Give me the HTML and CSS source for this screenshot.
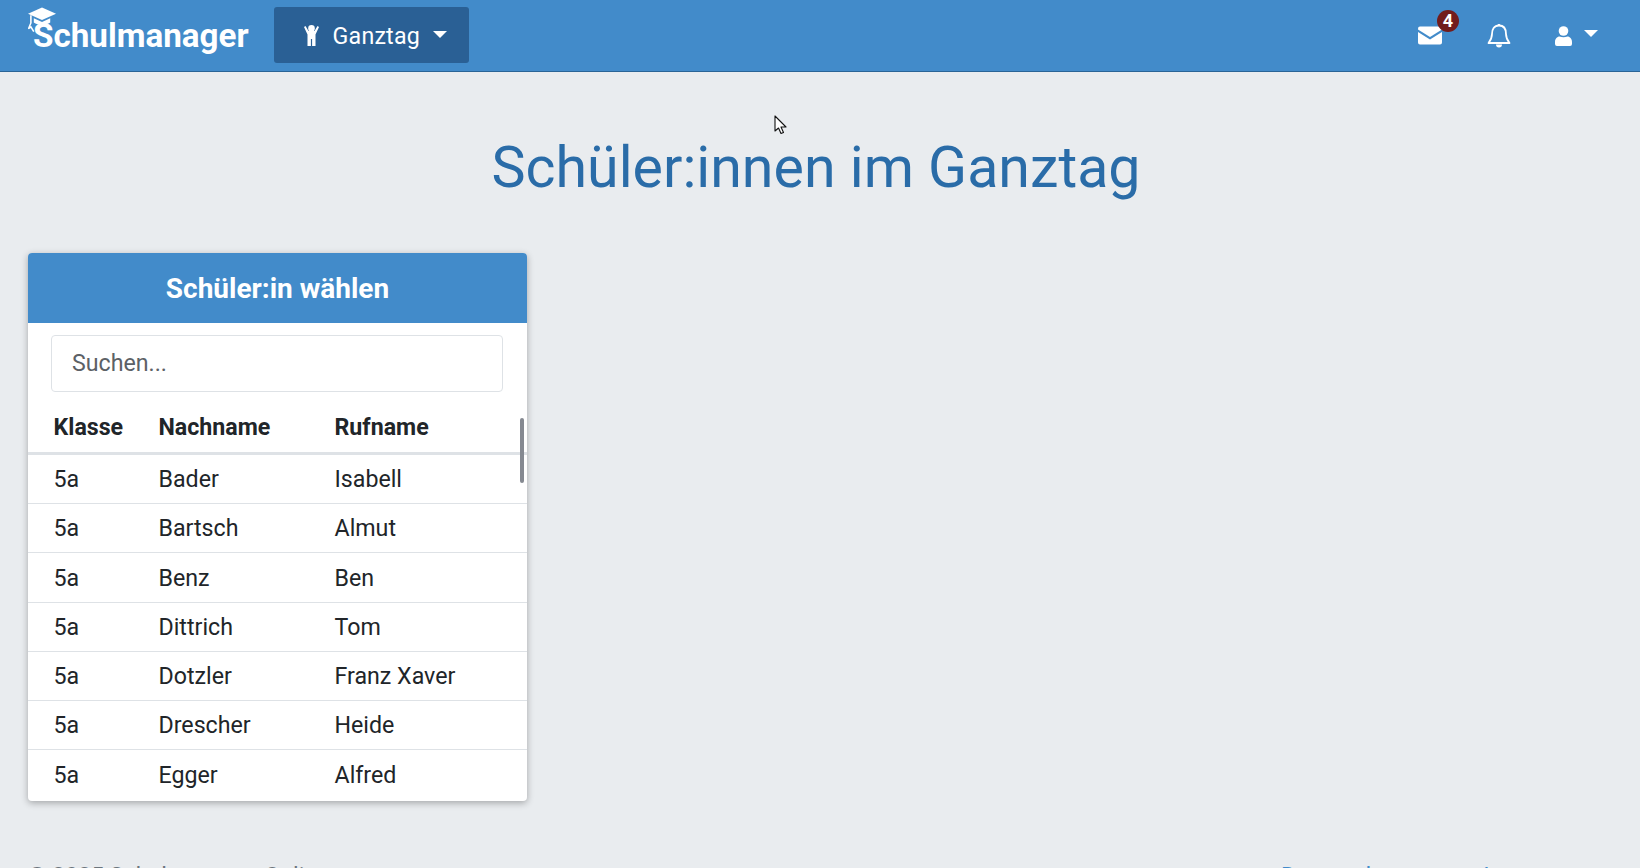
FILE: index.html
```html
<!DOCTYPE html>
<html lang="de">
<head>
<meta charset="utf-8">
<title>Schulmanager</title>
<link rel="stylesheet" href="styles.css">
</head>
<body>
<header class="navbar">
  <a class="brand">
    <svg class="brand-cap" viewBox="0 0 30 30"><path d="M14.500 0 L29 6.500 L14.500 13 L0 6.500 Z" fill="#fff"/><path d="M6 11 L14.500 15 L23 11 L23 15.500 C19 18.500 10 18.500 6 15.500 Z" fill="#fff"/><path d="M3 8 L3 16 L0.500 22 L3 20 L6 25" fill="none" stroke="#fff" stroke-width="1.600"/></svg>
    <span>Schulmanager</span>
  </a>
  <button class="module-btn">
    <svg class="child-icon" viewBox="0 0 15 21"><circle cx="7.500" cy="3.400" r="3.300" fill="#fff"/><path d="M1.500 1 L4.500 6 L10.500 6 L13.500 1 L15 2 L11.500 9.500 L11.500 21 L8.100 21 L8.100 14 L6.900 14 L6.900 21 L3.500 21 L3.500 9.500 L0 2 Z" fill="#fff"/></svg>
    <span>Ganztag</span>
    <i class="caret caret-lg"></i>
  </button>
  <nav class="nav-icons">
    <a class="icon-link mail">
      <svg class="mail-icon" viewBox="0 0 24 18"><path d="M2 0 H22 A2 2 0 0 1 24 2 V3 L12 10.500 L0 3 V2 A2 2 0 0 1 2 0 Z" fill="#fff"/><path d="M0 5.500 L12 13 L24 5.500 V16 A2 2 0 0 1 22 18 H2 A2 2 0 0 1 0 16 Z" fill="#fff"/></svg>
      <span class="badge">4</span>
    </a>
    <a class="icon-link bell">
      <svg class="bell-icon" viewBox="0 0 24 26"><path d="M12 2.500 C7 2.500 5 6.500 5 11 C5 15.500 3.500 17.500 1.500 20 H22.500 C20.500 17.500 19 15.500 19 11 C19 6.500 17 2.500 12 2.500 Z" fill="none" stroke="#fff" stroke-width="1.800" stroke-linejoin="round"/><path d="M10.800 1 H13.200 V3 H10.800 Z M9 21.500 H15 A3 3 0 0 1 9 21.500 Z" fill="#fff"/></svg>
    </a>
    <a class="icon-link user">
      <svg class="user-icon" viewBox="0 0 17 20"><circle cx="8.500" cy="5" r="4.800" fill="#fff"/><path d="M0 16 C0 12 3 10.500 4.500 10.500 C7 11.500 10 11.500 12.500 10.500 C14 10.500 17 12 17 16 V18 A2 2 0 0 1 15 20 H2 A2 2 0 0 1 0 18 Z" fill="#fff"/></svg>
      <i class="caret"></i>
    </a>
  </nav>
</header>

<main class="content">
  <h1 class="page-title">Schüler:innen im Ganztag</h1>
  <section class="card">
    <h2 class="card-head">Schüler:in wählen</h2>
    <div class="search-wrap"><input class="search" type="text" placeholder="Suchen..."></div>
    <div class="table-wrap">
      <table class="students">
        <thead><tr><th>Klasse</th><th>Nachname</th><th>Rufname</th></tr></thead>
        <tbody>
          <tr><td>5a</td><td>Bader</td><td>Isabell</td></tr>
          <tr><td>5a</td><td>Bartsch</td><td>Almut</td></tr>
          <tr><td>5a</td><td>Benz</td><td>Ben</td></tr>
          <tr><td>5a</td><td>Dittrich</td><td>Tom</td></tr>
          <tr><td>5a</td><td>Dotzler</td><td>Franz Xaver</td></tr>
          <tr><td>5a</td><td>Drescher</td><td>Heide</td></tr>
          <tr><td>5a</td><td>Egger</td><td>Alfred</td></tr>
        </tbody>
      </table>
      <div class="scroll-thumb"></div>
    </div>
  </section>
  <footer class="footer">
    <span>© 2025 Schulmanager Online</span>
    <span class="footer-links"><a>Datenschutz</a><a>Impressum</a></span>
  </footer>
</main>

<svg class="cursor" viewBox="0 0 14 20"><path d="M1 1 V16 L4.500 13 L7 18.500 L9.500 17.500 L7 12 L12 12 Z" fill="#fff" stroke="#111" stroke-width="1.100" stroke-linejoin="round"/></svg>
</body>
</html>
```
FILE: styles.css
```css
* { box-sizing: border-box; }
html, body { height: 868px; overflow: hidden; }
body {
  margin: 0;
  background: #e9ecef;
  color: #212529;
  font-family: Roboto, "Liberation Sans", sans-serif;
  font-size: 23.2px;
}
.navbar {
  height: 72px;
  background: #428bca;
  border-bottom: 1px solid #2a6496;
  display: flex;
  align-items: center;
  padding: 0 28px;
}
.brand {
  position: relative;
  color: #fff;
  font-size: 33.2px;
  font-weight: 700;
  margin: 0 25px 0 5px;
  line-height: 74px;
}
.brand-cap {
  position: absolute;
  left: -5px;
  top: 8px;
  width: 29px;
  height: 30px;
}
.module-btn {
  width: 195px;
  height: 56px;
  margin-top: -1px;
  background: #2a6095;
  border: 0;
  border-radius: 3px;
  color: #fff;
  font: 400 23.2px Roboto, sans-serif;
  display: flex;
  align-items: center;
  padding: 1px 0 0 30px;
  letter-spacing: 0.2px;
}
.child-icon { width: 15px; height: 21px; margin-right: 14px; }
.caret {
  display: inline-block;
  border-top: 7px solid #fff;
  border-left: 7px solid transparent;
  border-right: 7px solid transparent;
}
.caret-lg { margin-left: 13px; margin-bottom: 2px; }
.nav-icons {
  margin-left: auto;
  display: flex;
  align-items: center;
  padding-right: 14px;
}
.icon-link { position: relative; display: flex; align-items: center; }
.mail-icon { width: 24px; height: 19px; display: block; }
.badge {
  position: absolute;
  left: 19px;
  top: -16px;
  width: 22px;
  height: 22px;
  border-radius: 50%;
  background: #721c1c;
  color: #fff;
  font-size: 18px;
  font-weight: 700;
  line-height: 22px;
  text-align: center;
}
.mail { margin-right: 1px; }
.bell { margin-left: 44px; }
.bell-icon { width: 24px; height: 26px; display: block; }
.user { margin-left: 44px; }
.user-icon { width: 17px; height: 20px; margin-right: 12px; }
.user .caret { margin-bottom: 5px; }
.content { padding: 0 28px; }
.page-title {
  margin: 61px 0 50px;
  padding-right: 8px;
  color: #2a6ca8;
  font-size: 57.3px;
  font-weight: 400;
  line-height: 70px;
  text-align: center;
}
.card {
  width: 499px;
  height: 548px;
  background: #fff;
  border-radius: 4px;
  overflow: hidden;
  box-shadow: 0 2px 7px rgba(0,0,0,.3);
}
.card-head {
  margin: 0;
  height: 70px;
  background: #428bca;
  color: #fff;
  font-size: 28px;
  font-weight: 700;
  line-height: 72px;
  text-align: center;
}
.search-wrap { padding: 12px 24px 0 23px; }
.search {
  display: block;
  width: 100%;
  height: 57px;
  padding: 0 20px 2px;
  border: 1px solid #dee2e6;
  border-radius: 4px;
  background: #fff;
  font: 400 23.2px Roboto, sans-serif;
  outline: 0;
}
.search::placeholder { color: #5c6166; opacity: 1; }
.table-wrap { position: relative; }
.students {
  width: 100%;
  border-collapse: separate;
  border-spacing: 0;
  table-layout: fixed;
}
.students th, .students td {
  padding: 0 0 0 25.5px;
  text-align: left;
  height: 49.220px;
}
.students th {
  font-weight: 700;
  height: 63px;
  padding-top: 10px;
  border-bottom: 3px solid #dee2e6;
}
.students td { border-bottom: 1px solid #dee2e6; }
.students tr:last-child td { border-bottom: 0; }
.students th:nth-child(1) { width: 105px; }
.students th:nth-child(2) { width: 176px; }
.scroll-thumb {
  position: absolute;
  left: 492px;
  top: 26px;
  width: 4px;
  height: 65px;
  background: #858991;
  border-radius: 2px;
}
.footer {
  margin-top: 61px;
  display: flex;
  justify-content: space-between;
  color: #6c757d;
  line-height: 28px;
}
.footer-links { color: #428bca; padding-right: 12px; display: flex; gap: 73px; }
.cursor {
  position: absolute;
  left: 774px;
  top: 115px;
  width: 14px;
  height: 20px;
}
```
